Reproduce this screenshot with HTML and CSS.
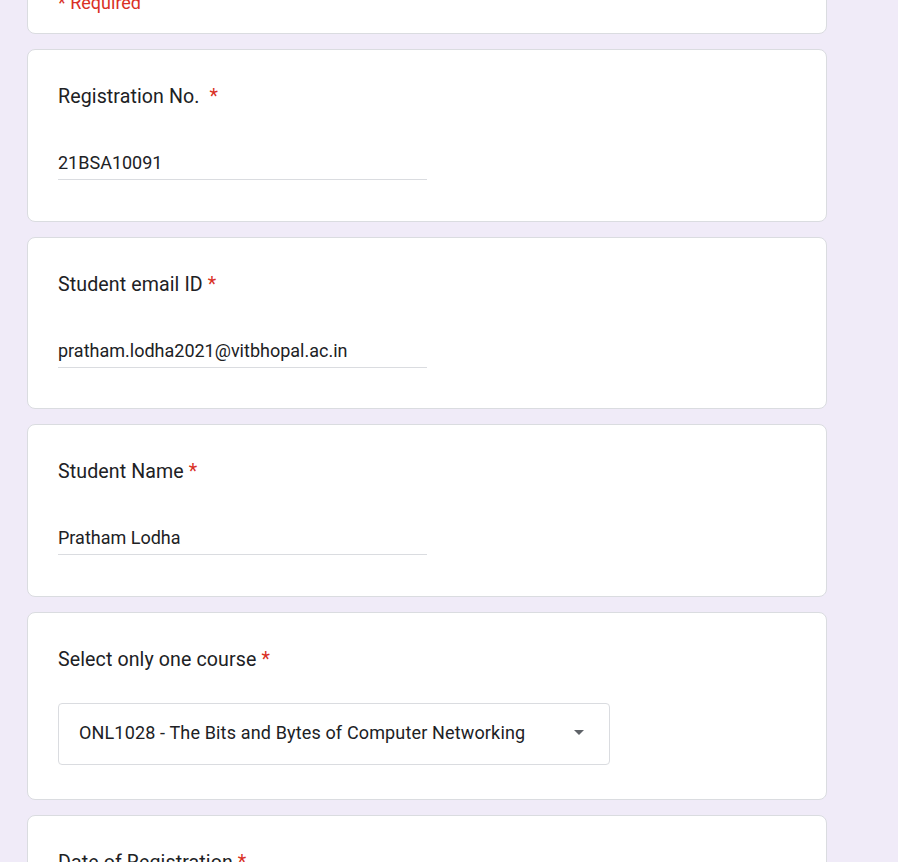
FILE: index.html
```html
<!DOCTYPE html>
<html>
<head>
<meta charset="utf-8">
<link rel="stylesheet" href="styles.css">
</head>
<body>
<div class="form">
  <div class="card card-top">
    <div class="required">* Required</div>
  </div>
  <div class="card">
    <div class="title">Registration No. &nbsp;<span class="star">*</span></div>
    <div class="answer">21BSA10091</div>
  </div>
  <div class="card">
    <div class="title">Student email ID <span class="star">*</span></div>
    <div class="answer">pratham.lodha2021@vitbhopal.ac.in</div>
  </div>
  <div class="card">
    <div class="title">Student Name <span class="star">*</span></div>
    <div class="answer">Pratham Lodha</div>
  </div>
  <div class="card card-select">
    <div class="title">Select only one course <span class="star">*</span></div>
    <div class="select">
      <span class="select-text">ONL1028 - The Bits and Bytes of Computer Networking</span>
      <svg class="arrow" width="10" height="5" viewBox="0 0 10 5"><path d="M0 0 L10 0 L5 5 Z" fill="#5f6368"/></svg>
    </div>
  </div>
  <div class="card">
    <div class="title">Date of Registration <span class="star">*</span></div>
    <div class="answer">&nbsp;</div>
  </div>
</div>
</body>
</html>
```
FILE: styles.css
```css
html, body {
  margin: 0;
  padding: 0;
  background: #f0ebf8;
  overflow: hidden;
}
body {
  font-family: Roboto, "Liberation Sans", sans-serif;
  color: #202124;
}
.form {
  margin-top: -34.6px;
  margin-left: 27px;
  width: 800px;
  display: flex;
  flex-direction: column;
  gap: 15px;
}
.card {
  background: #fff;
  border: 1px solid #dadce0;
  border-radius: 8px;
  padding: 33px 30px 40.5px;
}
.card-top {
  padding: 25px 30px 18px;
}
.required {
  color: #d93025;
  font-size: 18px;
  line-height: 24px;
}
.title {
  font-size: 19.6px;
  line-height: 28px;
  letter-spacing: 0.1px;
}
.star {
  color: #d93025;
}
.answer {
  margin-top: 40px;
  width: 369px;
  font-size: 18px;
  line-height: 24px;
  padding-bottom: 4px;
  border-bottom: 1px solid #dadce0;
}
.card-select {
  padding-bottom: 34px;
}
.select {
  margin-top: 29px;
  width: 505px;
  height: 58px;
  border: 1px solid #dadce0;
  border-radius: 4px;
  padding: 0 25px 2px 20px;
  display: flex;
  align-items: center;
  justify-content: space-between;
  font-size: 18px;
  letter-spacing: 0.15px;
}
.select-text {
  white-space: nowrap;
}
.arrow {
  display: block;
  flex: none;
}
```
